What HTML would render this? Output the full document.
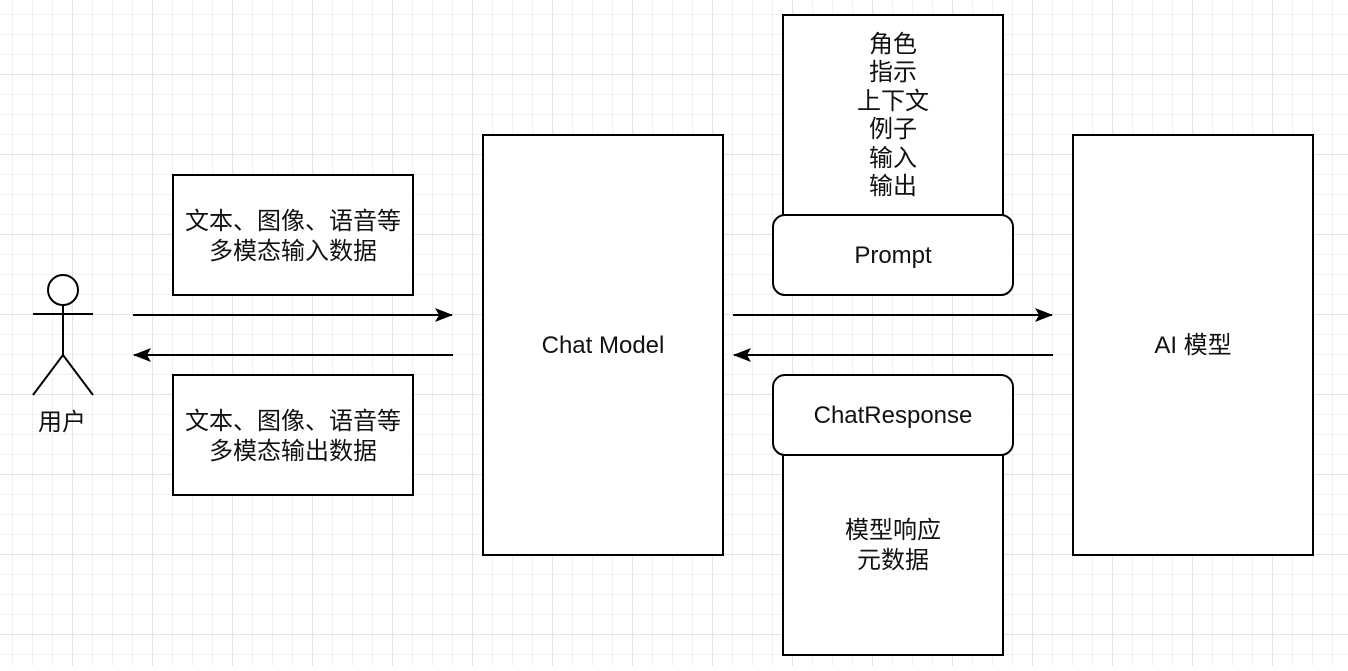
<!DOCTYPE html>
<html><head><meta charset="utf-8"><style>
body{margin:0;width:1348px;height:666px;overflow:hidden;background:#fff;}
svg text{font-family:"Liberation Sans","Noto Sans CJK SC",sans-serif;font-size:24px;fill:#111;text-anchor:middle;}
</style></head><body>
<svg width="1348" height="666" xmlns="http://www.w3.org/2000/svg">
<defs>
<pattern id="minor" x="12" y="14" width="20" height="20" patternUnits="userSpaceOnUse">
<path d="M0 0H20M0 0V20" stroke="#ececec" stroke-width="1.5" fill="none"/>
</pattern>
<pattern id="major" x="72" y="74" width="80" height="80" patternUnits="userSpaceOnUse">
<path d="M0 0H80M0 0V80" stroke="#d4d4d4" stroke-width="1" fill="none"/>
</pattern>
<marker id="ah" markerWidth="18" markerHeight="14" refX="17" refY="7" orient="auto" markerUnits="userSpaceOnUse">
<path d="M0 0L18 7L0 14L4 7Z" fill="#000"/>
</marker>
</defs>
<rect width="1348" height="666" fill="url(#minor)"/>
<rect width="1348" height="666" fill="url(#major)"/>
<g stroke="#000" stroke-width="2" fill="none">
<circle cx="63" cy="290" r="15" fill="#fff"/>
<path d="M33 314H93M63 305V355M33 395L63 355L93 395"/>
<path d="M133 315H452" marker-end="url(#ah)"/>
<path d="M453 355H134" marker-end="url(#ah)"/>
<path d="M733 315H1052" marker-end="url(#ah)"/>
<path d="M1053 355H734" marker-end="url(#ah)"/>
</g>
<g stroke="#000" stroke-width="2" fill="#fff">
<rect x="173" y="175" width="240" height="120"/>
<rect x="173" y="375" width="240" height="120"/>
<rect x="483" y="135" width="240" height="420"/>
<rect x="1073" y="135" width="240" height="420"/>
<rect x="783" y="15" width="220" height="200"/>
<rect x="783" y="455" width="220" height="200"/>
<rect x="773" y="215" width="240" height="80" rx="12"/>
<rect x="773" y="375" width="240" height="80" rx="12"/>
</g>
<text x="62" y="430">用户</text>
<text x="293" y="229">文本、图像、语音等</text>
<text x="293" y="259">多模态输入数据</text>
<text x="293" y="429">文本、图像、语音等</text>
<text x="293" y="459">多模态输出数据</text>
<text x="603" y="353">Chat Model</text>
<text x="1193" y="353">AI 模型</text>
<text x="893" y="263">Prompt</text>
<text x="893" y="423">ChatResponse</text>
<text x="893" y="52">角色</text>
<text x="893" y="80">指示</text>
<text x="893" y="109">上下文</text>
<text x="893" y="137">例子</text>
<text x="893" y="166">输入</text>
<text x="893" y="194">输出</text>
<text x="893" y="538">模型响应</text>
<text x="893" y="568">元数据</text>
</svg>
</body></html>
